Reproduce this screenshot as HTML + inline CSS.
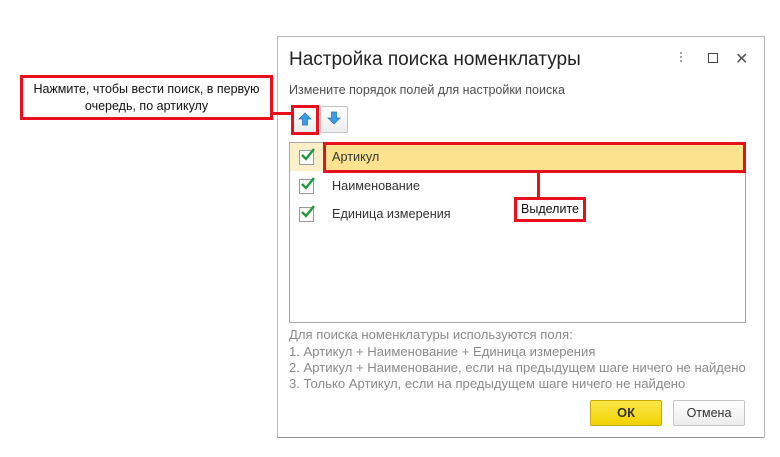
<!DOCTYPE html>
<html><head><meta charset="utf-8"><style>
*{margin:0;padding:0;box-sizing:border-box}
body{width:780px;height:457px;background:#fff;position:relative;font-family:"Liberation Sans",sans-serif;overflow:hidden}
.a{position:absolute}
.dlg{left:277px;top:36px;width:488px;height:402px;border:1px solid #b9b9b9;border-bottom-color:#999;background:#fff}
.title{left:289px;top:49px;font-size:19px;color:#222}
.sub{left:289px;top:83px;font-size:12.5px;color:#4d4d4d}
.btn{border:1px solid #c4c4c4;border-radius:2px;background:linear-gradient(#fff,#ececec)}
.list{left:289px;top:142px;width:457px;height:181px;border:1px solid #a9a9a9}
.row{left:290px;width:455px;height:28px;font-size:12.7px;color:#333}
.cb{position:absolute;left:9px;top:7px;width:15px;height:15px;border:1px solid #999;background:#fff}
.red{border:3px solid #e8101c}
.ft{left:289px;font-size:13.1px;color:#8a8a8a}
</style></head><body>
<div class="a dlg"></div>
<div class="a title">Настройка поиска номенклатуры</div>
<div class="a" style="left:680px;top:51px;width:2px;height:12px;background:radial-gradient(circle,#888 1px,transparent 1px) 0 0/2px 4px"></div>
<div class="a" style="left:708px;top:53px;width:10px;height:10px;border:1.5px solid #444"></div>
<div class="a" style="left:735px;top:49px;font-size:16px;color:#555">✕</div>
<div class="a sub">Измените порядок полей для настройки поиска</div>
<div class="a btn" style="left:291px;top:106px;width:28px;height:27px"></div>
<div class="a btn" style="left:320px;top:106px;width:28px;height:27px"></div>
<svg class="a" style="left:297px;top:111px" width="16" height="16"><path d="M8 2 L14 8 H10.5 V14 H5.5 V8 H2 Z" fill="#3c9ce0" stroke="#1f6fb0" stroke-width=".7"/></svg>
<svg class="a" style="left:326px;top:110px" width="16" height="16"><path d="M8 14 L14 8 H10.5 V2 H5.5 V8 H2 Z" fill="#3c9ce0" stroke="#1f6fb0" stroke-width=".7"/></svg>
<div class="a red" style="left:291px;top:105px;width:28px;height:30px"></div>
<div class="a list"></div>
<div class="a row" style="top:143px;background:#fdf0c9"><div style="position:absolute;left:34px;top:0;right:0;height:28px;background:#fde38f"></div></div>
<div class="a row" style="top:143px"><div class="cb"></div><span class="a" style="left:42px;top:7px">Артикул</span></div>
<div class="a row" style="top:172px"><div class="cb"></div><span class="a" style="left:42px;top:7px">Наименование</span></div>
<div class="a row" style="top:200px"><div class="cb"></div><span class="a" style="left:42px;top:7px">Единица измерения</span></div>
<svg class="a" style="left:299px;top:146px" width="18" height="80"><g fill="none" stroke="#1d9a3a" stroke-width="2.4"><path d="M3 9 L7 13 L15 3"/><path d="M3 38 L7 42 L15 32"/><path d="M3 66 L7 70 L15 60"/></g></svg>
<div class="a red" style="left:323px;top:142px;width:423px;height:31px"></div>
<div class="a" style="left:537px;top:172px;width:3px;height:26px;background:#e8101c"></div>
<div class="a red" style="left:514px;top:197px;width:72px;height:25px;background:#fff;font-size:12.5px;color:#111;text-align:center;line-height:19px">Выделите</div>
<div class="a red" style="left:20px;top:75px;width:253px;height:45px;background:#fff;font-size:12.5px;color:#111;text-align:center;line-height:17px;padding-top:3px">Нажмите, чтобы вести поиск, в первую<br>очередь, по артикулу</div>
<div class="a" style="left:272px;top:112px;width:20px;height:3px;background:#e8101c"></div>
<div class="a ft" style="top:327px">Для поиска номенклатуры используются поля:</div>
<div class="a ft" style="top:344px">1. Артикул + Наименование + Единица измерения</div>
<div class="a ft" style="top:360px">2. Артикул + Наименование, если на предыдущем шаге ничего не найдено</div>
<div class="a ft" style="top:376px">3. Только Артикул, если на предыдущем шаге ничего не найдено</div>
<div class="a" style="left:590px;top:400px;width:72px;height:26px;border:1px solid #c9a800;border-radius:2px;background:linear-gradient(#fbe74a,#f2d200);font-size:13px;font-weight:bold;color:#333;text-align:center;line-height:24px">ОК</div>
<div class="a btn" style="left:673px;top:400px;width:72px;height:26px;font-size:12.5px;color:#333;text-align:center;line-height:24px">Отмена</div>
</body></html>
